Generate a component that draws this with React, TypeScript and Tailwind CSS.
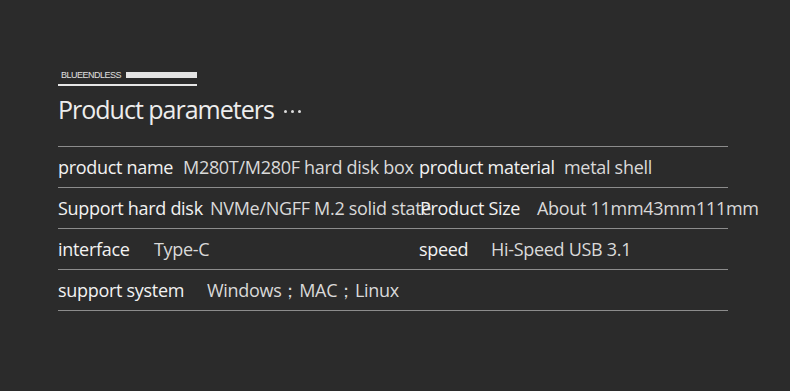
import React from "react";

const font = { fontFamily: '"Open Sans", "Noto Sans", sans-serif' };

type Cell = { label: string; value: string; w: number };

function Row({ left, right, leftW }: { left: Cell; right?: Cell; leftW: number }) {
  return (
    <div className="flex h-[41px] items-center border-b border-[#8c8c8c] whitespace-nowrap">
      <div className="flex shrink-0 items-center" style={{ width: leftW }}>
        <span className="shrink-0 text-[#f2f2f2]" style={{ width: left.w }}>{left.label}</span>
        <span className="text-[#d9d9d9]">{left.value}</span>
      </div>
      {right && (
        <div className="flex items-center">
          <span className="shrink-0 text-[#f2f2f2]" style={{ width: right.w }}>{right.label}</span>
          <span className="text-[#d9d9d9]">{right.value}</span>
        </div>
      )}
    </div>
  );
}

export default function App() {
  return (
    <div className="w-[790px] h-[391px] bg-[#2b2b2b] overflow-hidden" style={font}>
      <div className="pl-[58px] pt-[70px]">
        <div className="w-[139px] border-b-2 border-[#e6e6e6] pb-[4px] flex items-center h-[10px] box-content">
          <span
            className="ml-[3px] text-[9px] leading-[10px] text-[#e0e0e0] tracking-[-0.5px]"
            style={{ fontFamily: '"Liberation Sans", Arial, sans-serif' }}
          >
            BLUEENDLESS
          </span>
          <span className="ml-[5px] h-[6px] flex-1 bg-[#e4e4e4]" />
        </div>
        <div className="mt-[7px] flex items-center h-[34px]">
          <span className="text-[25px] text-[#ededed] tracking-[-1px]">Product parameters</span>
          <span className="ml-[10px] mt-[3px] flex gap-[4px]">
            <span className="w-[3px] h-[3px] rounded-full bg-[#dcdcdc]" />
            <span className="w-[3px] h-[3px] rounded-full bg-[#dcdcdc]" />
            <span className="w-[3px] h-[3px] rounded-full bg-[#dcdcdc]" />
          </span>
        </div>
        <div className="mt-[19px] w-[670px] border-t border-[#8c8c8c] text-[18px] tracking-[-0.3px]">
          <Row
            leftW={361}
            left={{ label: "product name", value: "M280T/M280F hard disk box", w: 125 }}
            right={{ label: "product material", value: "metal shell", w: 145 }}
          />
          <Row
            leftW={362}
            left={{ label: "Support hard disk", value: "NVMe/NGFF M.2 solid state", w: 152 }}
            right={{ label: "Product Size", value: "About 11mm43mm111mm", w: 117 }}
          />
          <Row
            leftW={361}
            left={{ label: "interface", value: "Type-C", w: 96 }}
            right={{ label: "speed", value: "Hi-Speed USB 3.1", w: 72 }}
          />
          <Row leftW={361} left={{ label: "support system", value: "Windows；MAC；Linux", w: 149 }} />
        </div>
      </div>
    </div>
  );
}
